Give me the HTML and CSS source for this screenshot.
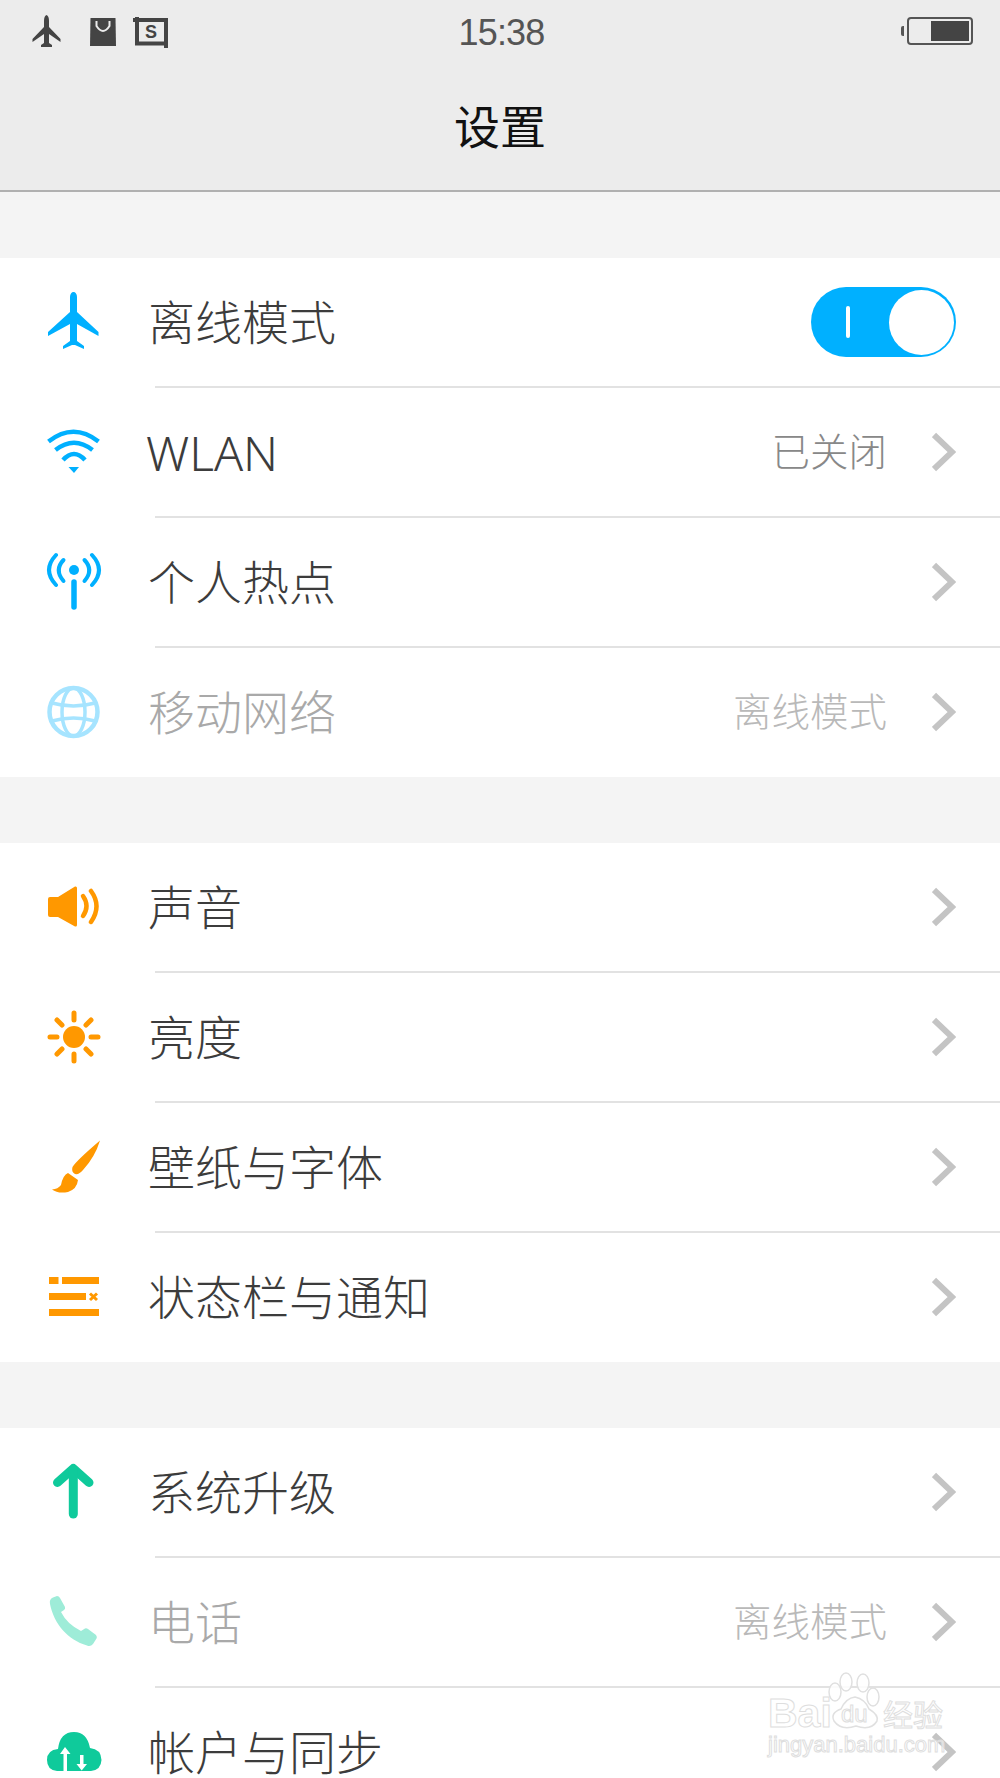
FILE: index.html
```html
<!DOCTYPE html>
<html lang="zh-CN">
<head>
    <meta charset="UTF-8">
    <meta name="viewport" content="width=device-width, initial-scale=1.0">
    <link rel="stylesheet" href="styles.css">
    <title>设置</title>
</head>
<body>
    <div class="page">

        <header class="top">
            <div class="status">
                <svg class="status-icons" viewBox="0 0 140 36" width="140" height="36">
                    <path class="dark" d="M16.500 1 Q19 2 19 7 V13 L30.500 25 V28 L19 20 V29 L22 31 V33 H11 V31 L14 29 V20 L2.500 28 V25 L14 13 V7 Q14 2 16.500 1Z"/>
                    <path class="dark" d="M60.500 4 H85.500 L86 32 H60Z"/>
                    <path class="cut" d="M66.500 7 V12 Q73 22 79.500 12 V7"/>
                    <path class="crop" d="M103 6 H136 V34 M107 3 V29.500 H138"/>
                    <text class="crop-s" x="121" y="24">S</text>
                </svg>
                <div class="time">15:38</div>
                <div class="battery">
                    <span class="battery-nub"></span>
                    <span class="battery-body"><span class="battery-level"></span></span>
                </div>
            </div>
            <h1 class="title">设置</h1>
        </header>

        <section class="group">
            <div class="row">
                <svg class="icon" viewBox="0 0 60 60"><path class="blue" d="M30.500 0 C32.500 0 34 2 34 5 V20 L55.500 40 V44 L34 32 V49 L41 54 V57 L32 53 H29 L20 57 V54 L27 49 V32 L5 44 V40 L27 20 V5 C27 2 28.500 0 30.500 0Z"/></svg>
                <span class="label">离线模式</span>
                <div class="toggle"><span class="toggle-bar"></span><span class="toggle-knob"></span></div>
            </div>
            <div class="sep"></div>
            <div class="row">
                <svg class="icon" viewBox="0 0 60 60">
                    <g class="line-blue"><path d="M5.500 19.500 Q30.500 0 55.500 19.500"/><path d="M12.500 28 Q31 13.500 49.500 28"/><path d="M20 38 Q31 26 42 38"/></g>
                    <path class="blue" d="M25.500 45 H36 L31 51Z"/>
                </svg>
                <span class="label latin">WLAN</span>
                <span class="value">已关闭</span>
                <svg class="chev" viewBox="0 0 24 40"><path d="M2 3 L20 20 L2 37"/></svg>
            </div>
            <div class="sep"></div>
            <div class="row">
                <svg class="icon" viewBox="0 0 60 60">
                    <circle class="blue" cx="31" cy="18" r="5"/>
                    <path class="line-blue" d="M31 30 V55"/>
                    <g class="line-blue thin"><path d="M20.500 8 Q11 18 20.500 29"/><path d="M41.500 8 Q51 18 41.500 29"/><path d="M13 3 Q-1 18 13 33"/><path d="M49 3 Q63 18 49 33"/></g>
                </svg>
                <span class="label">个人热点</span>
                <svg class="chev" viewBox="0 0 24 40"><path d="M2 3 L20 20 L2 37"/></svg>
            </div>
            <div class="sep"></div>
            <div class="row off">
                <svg class="icon" viewBox="0 0 60 60">
                    <g class="globe"><circle class="globe-ring" cx="30.500" cy="30" r="24"/><ellipse cx="30.500" cy="30" rx="11.500" ry="24"/><path d="M9 21 Q30.500 27 52 21 M9 39 Q30.500 33 52 39"/></g>
                </svg>
                <span class="label">移动网络</span>
                <span class="value">离线模式</span>
                <svg class="chev" viewBox="0 0 24 40"><path d="M2 3 L20 20 L2 37"/></svg>
            </div>
        </section>

        <section class="group">
            <div class="row">
                <svg class="icon" viewBox="0 0 60 60">
                    <path class="orange" d="M5 22 Q5 20 7 20 H15 L32 9.500 Q34 9 34 11 V48 Q34 50 32 49.500 L15 40 H7 Q5 40 5 38Z"/>
                    <g class="line-orange"><path d="M40 19 Q47 29 40 39"/><path d="M48 14 Q59 29 48 45"/></g>
                </svg>
                <span class="label">声音</span>
                <svg class="chev" viewBox="0 0 24 40"><path d="M2 3 L20 20 L2 37"/></svg>
            </div>
            <div class="sep"></div>
            <div class="row">
                <svg class="icon" viewBox="0 0 60 60">
                    <circle class="orange" cx="31" cy="30" r="11"/>
                    <path class="line-orange" d="M31 6 V13 M31 47 V54 M7 30 H14 M48 30 H55 M14 13 L19 18 M48 13 L43 18 M14 47 L19 42 M48 47 L43 42"/>
                </svg>
                <span class="label">亮度</span>
                <svg class="chev" viewBox="0 0 24 40"><path d="M2 3 L20 20 L2 37"/></svg>
            </div>
            <div class="sep"></div>
            <div class="row">
                <svg class="icon" viewBox="0 0 60 60">
                    <path class="orange" d="M57 3.500 Q52 20 40 33 Q36 38 32 37 Q28 35 29.500 30 Q33 24 57 3.500Z"/>
                    <path class="orange" d="M25 36 L35 43 Q34 52 25 55 Q15 57 9 52.500 Q15 52 18 48 Q20 38 25 36Z"/>
                </svg>
                <span class="label">壁纸与字体</span>
                <svg class="chev" viewBox="0 0 24 40"><path d="M2 3 L20 20 L2 37"/></svg>
            </div>
            <div class="sep"></div>
            <div class="row">
                <svg class="icon" viewBox="0 0 60 60">
                    <path class="orange" d="M6 10 H15.500 V17 H6Z M19 10 H56 V17 H19Z M6 26 H43 V33 H6Z M6 42 H56 V49 H6Z"/>
                    <path class="x-mark" d="M47 26.500 L54 33 M54 26.500 L47 33"/>
                </svg>
                <span class="label">状态栏与通知</span>
                <svg class="chev" viewBox="0 0 24 40"><path d="M2 3 L20 20 L2 37"/></svg>
            </div>
        </section>

        <section class="group">
            <div class="row">
                <svg class="icon" viewBox="0 0 60 60">
                    <g class="line-green"><path d="M14.500 20.500 L30.300 6.500 L46 20.500"/><path d="M30.300 8 V52"/></g>
                </svg>
                <span class="label">系统升级</span>
                <svg class="chev" viewBox="0 0 24 40"><path d="M2 3 L20 20 L2 37"/></svg>
            </div>
            <div class="sep"></div>
            <div class="row off">
                <svg class="icon" viewBox="0 0 60 60">
                    <path class="mint" d="M7 12 Q6 7 10 5.500 L14 4 Q16 4 17 6 L22 15 Q22.500 17 21 18 L18 20 Q24 32 38 39 L42 36.500 Q43.500 36 45 37 L53 43 Q54.500 45 53.500 46.500 L50 52 Q47.500 55 44 53.500 C25 48 11 32 7 12Z"/>
                </svg>
                <span class="label">电话</span>
                <span class="value">离线模式</span>
                <svg class="chev" viewBox="0 0 24 40"><path d="M2 3 L20 20 L2 37"/></svg>
            </div>
            <div class="sep"></div>
            <div class="row">
                <svg class="icon" viewBox="0 0 60 60">
                    <path class="green" d="M14 49 Q4 48 4 38 Q4 28 15 27 Q17 10 31 10 Q44 10 47 26 Q58 27 58.500 38 Q58 48 48 49Z"/>
                    <path class="white" d="M22 25 L27.500 32 H24 V49 H20.500 V32 H17Z M37 33 H40.500 V42 H44 L38.700 48.500 L33.500 42 H37Z"/>
                </svg>
                <span class="label">帐户与同步</span>
                <svg class="chev" viewBox="0 0 24 40"><path d="M2 3 L20 20 L2 37"/></svg>
            </div>
        </section>

        <svg class="watermark" viewBox="0 0 195 100" width="195" height="100">
            <g class="paw">
                <ellipse cx="74" cy="27" rx="6" ry="9"/>
                <ellipse cx="85" cy="17" rx="6" ry="9"/>
                <ellipse cx="102" cy="18" rx="6" ry="9"/>
                <ellipse cx="112" cy="32" rx="6" ry="9"/>
                <path d="M94 32 Q104 34 108 44 Q118 50 116 56 Q110 66 95 61 Q80 66 73 56 Q69 48 80 44 Q85 33 94 32Z"/>
            </g>
            <text class="wm-big" x="7" y="62">Bai</text>
            <text class="wm-du" x="80" y="57">du</text>
            <text class="wm-cn" x="122" y="61">经验</text>
            <text class="wm-url" x="7" y="87">jingyan.baidu.com</text>
        </svg>

    </div>
</body>
</html>
```

FILE: styles.css
```css
*{
    margin:0;
    padding:0;
    box-sizing:border-box;
}
body{
    width:1000px;
    height:1778px;
    overflow:hidden;
    background:#f4f4f4;
    font-family:"Noto Sans CJK SC", "Liberation Sans", sans-serif;
}
.page{
    position:relative;
    width:1000px;
    height:1778px;
    overflow:hidden;
}

/* header */
.top{
    height:192px;
    background:#ececec;
    border-bottom:2px solid #b0b0b0;
}
.status{
    height:66px;
    padding:14px 27px 0 30px;
    display:grid;
    grid-template-columns:1fr auto 1fr;
    align-items:start;
}
.status-icons{
    display:block;
}
.dark{
    fill:#444;
}
.cut{
    fill:none;
    stroke:#ececec;
    stroke-width:2;
}
.crop{
    fill:none;
    stroke:#444;
    stroke-width:4;
}
.crop-s{
    font-family:"Liberation Sans", sans-serif;
    font-size:18px;
    font-weight:700;
    fill:#444;
    text-anchor:middle;
}
.time{
    font-family:"Liberation Sans", sans-serif;
    font-size:36px;
    line-height:38px;
    color:#555;
    letter-spacing:-0.8px;
}
.battery{
    justify-self:end;
    display:flex;
    align-items:center;
    gap:3px;
    margin-top:3px;
}
.battery-nub{
    width:3px;
    height:10px;
    background:#555;
    border-radius:2px 0 0 2px;
}
.battery-body{
    width:66px;
    height:28px;
    padding:2px;
    display:flex;
    justify-content:flex-end;
    border:2px solid #555;
    border-radius:4px;
}
.battery-level{
    width:38px;
    background:#444;
}
.title{
    margin-top:27px;
    font-size:46px;
    font-weight:400;
    line-height:62px;
    text-align:center;
    color:#111;
}

/* list */
.group{
    margin-top:66px;
    padding-bottom:1px;
    background:#fff;
}
.row{
    height:128px;
    padding:0 44px 0 43px;
    display:flex;
    align-items:center;
}
.sep{
    height:2px;
    margin-left:155px;
    background:#e2e2e2;
}
.icon{
    width:60px;
    height:60px;
    flex:none;
    margin-right:45px;
}
.label{
    flex:1;
    padding-bottom:6px;
    font-size:47px;
    font-weight:300;
    color:#3c3c3c;
}
.latin{
    padding-bottom:0;
    font-family:"Noto Sans", sans-serif;
    font-size:48px;
    margin-left:-2px;
}
.value{
    padding-bottom:6px;
    font-size:38.500px;
    font-weight:300;
    color:#888;
    margin-right:45px;
}
.off .label{
    color:#a9a9a9;
}
.off .value{
    color:#b9b9b9;
}
.chev{
    width:24px;
    height:40px;
    flex:none;
}
.chev path{
    fill:none;
    stroke:#c4c4c4;
    stroke-width:6;
}

/* toggle */
.toggle{
    width:145px;
    height:70px;
    padding:0 2.500px 0 35px;
    display:flex;
    align-items:center;
    justify-content:space-between;
    background:#00b0ff;
    border-radius:35px;
}
.toggle-bar{
    width:4px;
    height:32px;
    background:#fff;
    border-radius:2px;
}
.toggle-knob{
    width:65px;
    height:65px;
    background:#fff;
    border-radius:50%;
}

/* icon colours */
.blue{ fill:#00b0ff; }
.orange{ fill:#ff9800; }
.green{ fill:#0fca9b; }
.mint{ fill:#9eecd8; }
.white{ fill:#fff; }
.line-blue path{
    fill:none;
    stroke:#00b0ff;
    stroke-width:4.500;
}
path.line-blue{
    fill:none;
    stroke:#00b0ff;
    stroke-width:5.500;
    stroke-linecap:round;
}
.line-blue.thin path{
    stroke-linecap:round;
    stroke-width:4;
}
.globe *{
    fill:none;
    stroke:#a6e4ff;
    stroke-width:3.500;
}
.globe .globe-ring{
    stroke-width:4.500;
}
.line-orange{
    fill:none;
    stroke:#ff9800;
    stroke-width:5;
    stroke-linecap:round;
}
.line-orange path{
    fill:none;
    stroke:#ff9800;
    stroke-width:4.500;
    stroke-linecap:round;
}
.x-mark{
    stroke:#ff9800;
    stroke-width:3;
}
.line-green path{
    fill:none;
    stroke:#0fca9b;
    stroke-width:9;
    stroke-linecap:round;
    stroke-linejoin:round;
}

/* baidu watermark */
.watermark{
    position:absolute;
    left:761px;
    top:1665px;
}
.paw *{
    fill:rgba(255,255,255,0.85);
    stroke:#e0e0e0;
    stroke-width:1.500;
}
.wm-big, .wm-du, .wm-url{
    font-family:"Liberation Sans", sans-serif;
}
.wm-big, .wm-du, .wm-cn, .wm-url{
    fill:rgba(255,255,255,0.6);
    stroke:#dedede;
    stroke-width:1;
}
.wm-big{
    font-size:41px;
    font-weight:700;
}
.wm-du{
    font-size:24px;
}
.wm-cn{
    font-size:30px;
}
.wm-url{
    font-size:22px;
}
```
